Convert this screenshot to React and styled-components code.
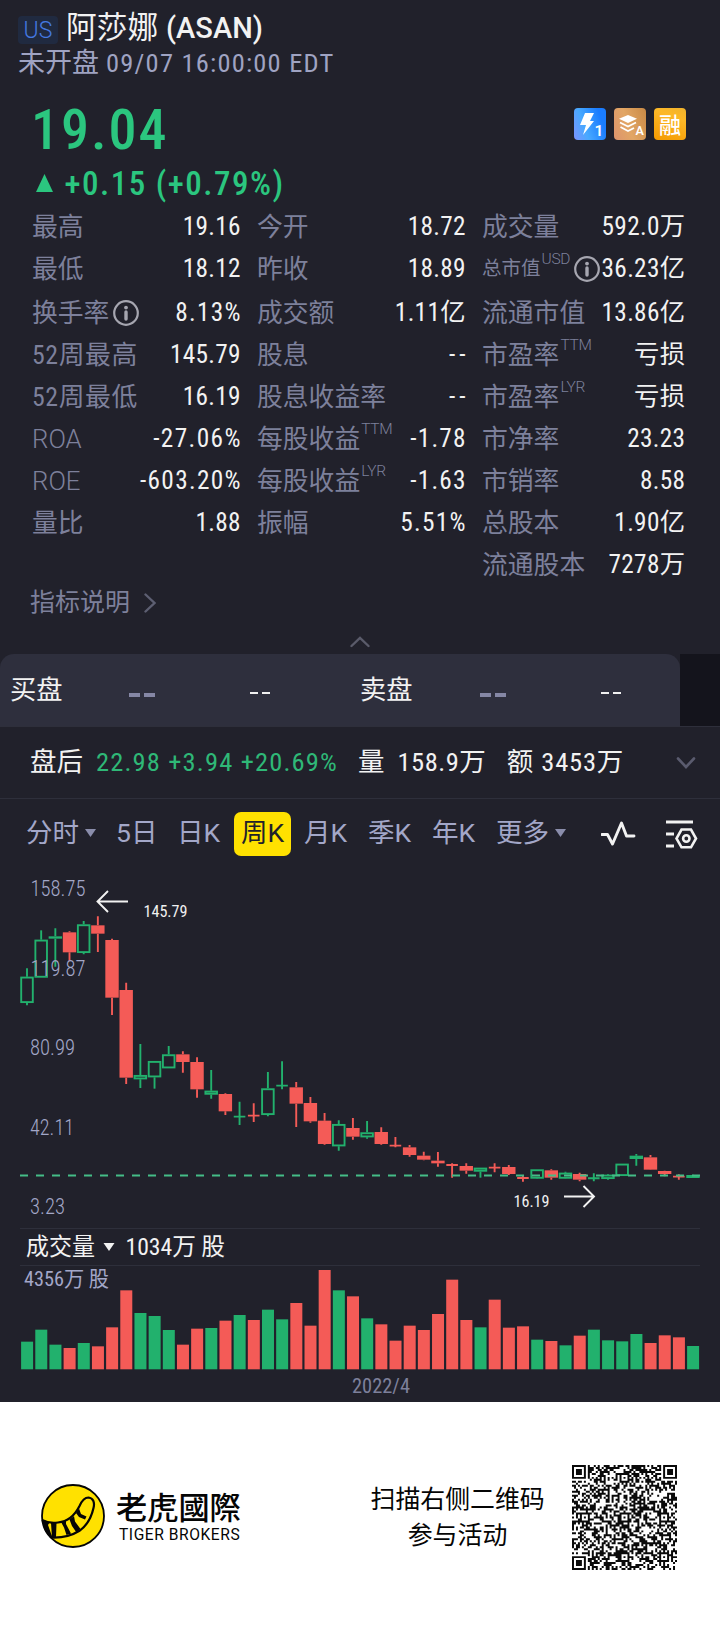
import React from 'react';
import styled, { createGlobalStyle } from 'styled-components';

const Global = createGlobalStyle`
  * { box-sizing: border-box; }
  body { margin: 0; background: #fff; }
`;

const condensed = '"Roboto Condensed", "Noto Sans CJK SC", sans-serif';
const regular = 'Roboto, "Noto Sans CJK SC", sans-serif';

const Page = styled.div`
  width: 720px;
  height: 1632px;
  display: flex;
  flex-direction: column;
  overflow: hidden;
  font-family: ${condensed};
  color: #f2f2f2;
`;
const Dark = styled.main`
  height: 1401.5px;
  background: #21212b;
  display: flex;
  flex-direction: column;
`;
const Text = styled.span`
  font-family: ${(p) => (p.$wide ? regular : condensed)};
  font-size: ${(p) => p.$size}px;
  font-weight: ${(p) => p.$weight || 400};
  letter-spacing: ${(p) => p.$ls || 0}px;
  color: ${(p) => p.$color || 'inherit'};
  line-height: 1;
  white-space: pre;
`;

/* Header */
const Header = styled.header`
  height: 96px;
  padding: 10px 0 0 18px;
`;
const TitleRow = styled.div`
  display: flex;
  align-items: center;
  height: 36px;
`;
const Market = styled.span`
  width: 40px;
  height: 28px;
  margin: 3px 8px 0 0;
  border-radius: 4px;
  background: #202a40;
  color: #4579e0;
  font: 350 23px/30px ${regular};
  text-align: center;
`;
const Status = styled.div`
  display: flex;
  align-items: center;
  gap: 7px;
  height: 34px;
  color: #9fa3c2;
`;

/* Price */
const PriceRow = styled.section`
  height: 110px;
  padding: 12px 34px 0 33px;
  display: flex;
  justify-content: space-between;
  color: #2bc67f;
`;
const PriceCol = styled.div`
  display: flex;
  flex-direction: column;
`;
const PriceLine = styled.div`
  height: 44px;
  margin-left: -2px;
  display: flex;
  align-items: center;
`;
const ChangeLine = styled.div`
  height: 40px;
  margin-top: 11px;
  display: flex;
  align-items: center;
  gap: 11.5px;
`;
const Badges = styled.div`
  display: flex;
  gap: 8px;
`;
const Badge = styled.span`
  width: 32px;
  height: 32px;
  border-radius: 4px;
  background: ${(p) => p.$bg};
  color: #fff;
  font: 500 22px/31px "Noto Sans CJK SC", sans-serif;
  text-align: center;
  overflow: hidden;
`;

/* Metrics */
const Metrics = styled.section`
  display: grid;
  grid-template-columns: 208.500px 208.500px 203px;
  column-gap: 16.500px;
  padding-left: 32px;
  height: 379px;
`;
const MetricCol = styled.div`
  display: flex;
  flex-direction: column;
`;
const Metric = styled.div`
  height: ${(p) => (p.$tall ? 44 : 42)}px;
  padding-top: ${(p) => (p.$tall ? 2 : 0)}px;
  display: flex;
  align-items: center;
  justify-content: space-between;
  white-space: nowrap;
`;
const Label = styled.span`
  display: flex;
  align-items: center;
  color: #7d809b;
  font-family: ${(p) => (p.$wide ? regular : condensed)};
  font-size: ${(p) => (p.$small ? 19.5 : 25.8)}px;
  font-weight: ${(p) => (p.$wide ? 350 : 400)};
  line-height: 36px;
  letter-spacing: ${(p) => p.$ls || 0}px;
`;
const Sup = styled.sup`
  font: 350 15.500px/16px ${regular};
  letter-spacing: -0.3px;
  align-self: flex-start;
  margin: 0 0 0 1px;
  vertical-align: baseline;
`;
const Value = styled.span`
  font-size: 25.300px;
  line-height: 36px;
  letter-spacing: ${(p) => p.$ls}px;
  margin-right: ${(p) => -p.$ls}px;
`;
const InfoIcon = styled.svg`
  margin-left: ${(p) => p.$gap}px;
  margin-right: ${(p) => p.$end || 0}px;
  flex: none;
`;

/* Explanation link and collapse handle */
const Explain = styled.div`
  height: 35px;
  padding-left: 30px;
  display: flex;
  align-items: center;
  gap: 14px;
  color: #7d809b;
`;
const Collapse = styled.div`
  height: 34px;
  display: flex;
  justify-content: center;
  align-items: center;
  padding-top: 10px;
`;

/* Bid / ask */
const BidWrap = styled.section`
  height: 72px;
  background: #21212b;
  display: grid;
  grid-template-columns: 680px 40px;
`;
const BidBar = styled.div`
  height: 73px;
  background: #2e2f3d;
  border-radius: 14px 14px 0 0;
  display: grid;
  grid-template-columns: 350px 330px;
  align-items: center;
`;
const Side = styled.div`
  display: grid;
  grid-template-columns: ${(p) => p.$first}px 120.5px 1fr;
  align-items: center;
  padding-left: 10px;
  height: 70px;
`;
const BidGap = styled.div`
  background: #14141c;
`;
const Dashes = styled.span`
  display: flex;
  gap: ${(p) => p.$gap}px;
  margin-top: ${(p) => p.$top}px;
  &::before, &::after {
    content: '';
    width: ${(p) => p.$w}px;
    height: ${(p) => p.$h}px;
    background: ${(p) => p.$c};
  }
`;

/* After-hours */
const AfterHours = styled.section`
  height: 73px;
  border-top: 1px solid #2e2f3b;
  border-bottom: 1px solid #2e2f3b;
  display: flex;
  align-items: center;
  padding: 0 24px 0 30px;
`;
const Gap = styled.span`
  flex: none;
  width: ${(p) => p.$w}px;
`;
const Push = styled.span`
  flex: 1;
`;

/* Tabs */
const Tabs = styled.nav`
  height: 70px;
  padding-left: 26px;
  display: flex;
  align-items: center;
  color: #a3a7c8;
`;
const Tab = styled.span`
  width: ${(p) => p.$w}px;
  height: 44px;
  flex: none;
  display: flex;
  align-items: center;
  gap: ${(p) => p.$gap || 0}px;
  justify-content: ${(p) => (p.$active ? 'center' : 'flex-start')};
  margin-right: ${(p) => p.$mr || 0}px;
  border-radius: 7px;
  background: ${(p) => (p.$active ? '#ffe100' : 'transparent')};
  color: ${(p) => (p.$active ? '#21212b' : 'inherit')};
  font: 370 26.5px/40px ${(p) => (p.$gap ? condensed : regular)};
  padding-bottom: 2px;
`;

const Chart = styled.svg`
  display: block;
  flex: none;
  font-family: ${condensed};
`;

/* Footer */
const Footer = styled.footer`
  flex: 1;
  background: #fff;
  color: #050505;
  display: flex;
  padding-left: 41px;
`;
const Logo = styled.svg`
  margin-top: 82.5px;
  flex: none;
`;
const Brand = styled.div`
  width: 136px;
  margin: 87px 0 0 11px;
  display: flex;
  flex-direction: column;
`;
const BrandName = styled.span`
  font: 500 31.200px/34px "Noto Sans CJK TC", "Noto Sans CJK SC", sans-serif;
  white-space: nowrap;
`;
const BrandLatin = styled.span`
  font: 400 15.6px/20px ${regular};
  letter-spacing: 0.55px;
  padding: 2px 0 0 3px;
  white-space: nowrap;
`;
const Invite = styled.div`
  width: 174px;
  margin: 77px 27.500px 0 118.500px;
  font: 400 24.9px/36px "Noto Sans CJK SC", sans-serif;
  text-align: center;
  white-space: nowrap;
`;
const Code = styled.svg`
  margin-top: 63px;
  flex: none;
`;

const Info = ({ gap, end }) => (
  <InfoIcon $gap={gap} $end={end} width="26" height="26" viewBox="0 0 26 26" fill="none">
    <circle cx="13" cy="13" r="11.8" stroke="#a6a6b0" strokeWidth="2.2" />
    <circle cx="13" cy="7.6" r="1.9" fill="#a6a6b0" />
    <path d="M13 12v7" stroke="#a6a6b0" strokeWidth="3.4" strokeLinecap="round" />
  </InfoIcon>
);

const METRICS = [
  [
    { label: '最高', value: '19.16' },
    { label: '最低', value: '18.12' },
    { label: '换手率', value: '8.13%', info: 4, ls: 1.3 },
    { label: '52周最高', value: '145.79', labelLs: 0.6 },
    { label: '52周最低', value: '16.19', labelLs: 0.6 },
    { label: 'ROA', value: '-27.06%', wide: true, ls: 1.4 },
    { label: 'ROE', value: '-603.20%', wide: true, ls: 1.3 },
    { label: '量比', value: '1.88' },
  ],
  [
    { label: '今开', value: '18.72' },
    { label: '昨收', value: '18.89' },
    { label: '成交额', value: '1.11亿' },
    { label: '股息', value: '--', ls: 4 },
    { label: '股息收益率', value: '--', ls: 4 },
    { label: '每股收益', sup: 'TTM', value: '-1.78', ls: 1.2 },
    { label: '每股收益', sup: 'LYR', value: '-1.63', ls: 1.2 },
    { label: '振幅', value: '5.51%', ls: 1.3 },
  ],
  [
    { label: '成交量', value: '592.0万' },
    { label: '总市值', sup: 'USD', value: '36.23亿', small: true, info: 4 },
    { label: '流通市值', value: '13.86亿' },
    { label: '市盈率', sup: 'TTM', value: '亏损' },
    { label: '市盈率', sup: 'LYR', value: '亏损' },
    { label: '市净率', value: '23.23' },
    { label: '市销率', value: '8.58' },
    { label: '总股本', value: '1.90亿' },
    { label: '流通股本', value: '7278万' },
  ],
];

/* rising?, high, low, body top, body bottom; thirds of a pixel below y = 870 */
const CANDLES = [
  [1, 295, 406, 320, 399], [1, 181, 323, 209, 323], [1, 175, 290, 199, 206, 1], [0, 184, 272, 187, 247],
  [1, 153, 253, 163, 249], [0, 139, 246, 166, 191], [0, 206, 435, 210, 383], [0, 338, 642, 360, 623],
  [1, 522, 654, 615, 628], [1, 573, 656, 573, 622], [1, 528, 595, 553, 595], [0, 544, 608, 553, 576],
  [0, 562, 683, 576, 658], [1, 600, 686, 662, 674], [0, 670, 735, 672, 724], [1, 695, 765, 738, 740],
  [0, 700, 756, 735, 738], [1, 606, 739, 655, 735], [1, 574, 658, 645, 648], [0, 636, 771, 652, 701],
  [0, 681, 758, 699, 754], [0, 729, 824, 752, 822], [1, 751, 842, 762, 829], [0, 744, 809, 774, 800],
  [1, 753, 806, 787, 802], [0, 772, 824, 786, 822], [0, 801, 832, 825, 829], [0, 825, 860, 832, 855],
  [0, 845, 871, 857, 869], [0, 846, 890, 872, 880], [0, 880, 923, 883, 886], [0, 880, 911, 888, 902],
  [1, 893, 923, 893, 905], [0, 880, 907, 891, 894], [0, 885, 915, 891, 912], [0, 918, 935, 922, 925],
  [1, 898, 927, 898, 926], [0, 898, 929, 901, 923], [1, 905, 927, 908, 926], [0, 908, 934, 912, 929],
  [1, 910, 934, 923, 926], [1, 912, 929, 914, 927], [1, 881, 918, 881, 918], [1, 852, 887, 857, 867, 1],
  [0, 855, 900, 862, 899], [0, 902, 919, 903, 912], [0, 913, 929, 918, 921], [1, 914, 924, 915, 924, 1],
];
/* rising?, bar top; thirds of a pixel below y = 1220 */
const VOLUMES = [
  [1, 365], [1, 329], [1, 374], [0, 384], [1, 369], [0, 379], [0, 322], [0, 211], [1, 279], [1, 288], [1, 330], [0, 374],
  [0, 326], [1, 324], [0, 302], [1, 285], [0, 300], [1, 269], [1, 298], [0, 249], [0, 317], [0, 150], [1, 211], [0, 229],
  [1, 295], [0, 313], [0, 362], [0, 317], [0, 330], [0, 282], [0, 179], [0, 300], [1, 322], [0, 239], [0, 323], [0, 319],
  [1, 359], [0, 363], [1, 376], [0, 347], [1, 329], [1, 361], [1, 364], [1, 342], [0, 369], [0, 346], [0, 352], [1, 378],
];
const UP = '#22b16d';
const DOWN = '#f45b57';
const pitch = 14.17;

const Candle = ({ index, data }) => {
  const [up, high, low, top, bottom, filled] = data;
  const x = 27 + index * pitch;
  const y = (v) => 870 + v / 3;
  const color = up ? UP : DOWN;
  const h = (bottom - top) / 3;
  if (h < 1.4) {
    return (
      <path d={`M${x} ${y(high)}V${y(low)}M${x - 5.8} ${y(top) + 0.6}h11.6`} stroke={color} strokeWidth="1.9" />
    );
  }
  const hollow = up && !filled && h > 3;
  return (
    <g stroke={color} strokeWidth="1.9">
      <path d={`M${x} ${y(high)}V${y(top)}M${x} ${y(bottom)}V${y(low)}`} />
      {hollow ? (
        <rect x={x - 5.8} y={y(top) + 0.9} width="11.6" height={h - 1.8} fill="none" />
      ) : (
        <rect x={x - 6.7} y={y(top)} width="13.4" height={h} fill={color} stroke="none" />
      )}
    </g>
  );
};

/* QR matrix, 53 modules a side */
const N = 53;
const buildCode = () => {
  let seed = 90731;
  const rnd = () => {
    seed = (seed * 1103515245 + 12345) % 2147483648;
    return seed / 2147483648;
  };
  const m = Array.from({ length: N }, () => Array.from({ length: N }, () => rnd() < 0.5));
  const ring = (cy, cx, r, levels) => {
    for (let y = -r; y <= r; y++)
      for (let x = -r; x <= r; x++) {
        const yy = cy + y;
        const xx = cx + x;
        if (yy >= 0 && xx >= 0 && yy < N && xx < N) m[yy][xx] = levels[Math.max(Math.abs(x), Math.abs(y))];
      }
  };
  for (let i = 8; i < N - 8; i++) {
    m[6][i] = i % 2 === 0;
    m[i][6] = i % 2 === 0;
  }
  [[3, 3], [3, N - 4], [N - 4, 3]].forEach(([y, x]) => ring(y, x, 4, [true, true, false, true, false]));
  [[6, 26], [26, 6], [26, 26], [26, 46], [46, 26], [46, 46]].forEach(([y, x]) => ring(y, x, 2, [true, false, true]));
  let d = '';
  m.forEach((row, y) => row.forEach((on, x) => { if (on) d += `M${x} ${y}h1v1h-1z`; }));
  return d;
};
const CODE = buildCode();

export default function App() {
  return (
    <Page>
      <Global />
      <Dark>
        <Header>
          <TitleRow>
            <Market>US</Market>
            <Text $size={30.700}>阿莎娜</Text>
            <Gap $w={8} />
            <Text $size={29} $weight={500} $wide>(ASAN)</Text>
          </TitleRow>
          <Status>
            <Text $size={27}>未开盘</Text>
            <Text $size={26.5} $ls={1.200} $weight={370}>09/07 16:00:00 EDT</Text>
          </Status>
        </Header>

        <PriceRow>
          <PriceCol>
            <PriceLine><Text $size={56} $weight={480} $ls={2}>19.04</Text></PriceLine>
            <ChangeLine>
              <svg width="20" height="20" viewBox="0 0 20 20"><path d="M11.500 1L20 19H3z" fill="#2bc67f" /></svg>
              <Text $size={33} $weight={460} $ls={1.5}>+0.15 (+0.79%)</Text>
            </ChangeLine>
          </PriceCol>
          <Badges>
            <Badge $bg="linear-gradient(70deg,#7b93ff 0%,#48a9ff 35%,#1a7cff 80%)">
              <svg width="32" height="32" viewBox="0 0 32 32">
                <path d="M11 5h9l-4 8h4L9 27l3-10H6z" fill="#fff" />
                <text x="20.500" y="27.500" fontSize="15.500" fontWeight="600" fill="#fff" fontFamily="Roboto">1</text>
              </svg>
            </Badge>
            <Badge $bg="linear-gradient(70deg,#dd946d 0%,#e2a665 45%,#c98a45 100%)">
              <svg width="32" height="32" viewBox="0 0 32 32" fill="none" stroke="#fff" strokeWidth="1.800">
                <path d="M14 7l9 3.800-9 4.200-9-4.200z" fill="#fff" stroke="none" />
                <path d="M6 14.500l8 4 8-4M6.500 19l7.500 4 6-3" />
                <text x="21.500" y="26.500" fontSize="12.500" fontWeight="600" fill="#fff" stroke="none" fontFamily="Roboto">A</text>
              </svg>
            </Badge>
            <Badge $bg="linear-gradient(200deg,#f0b32d 0%,#fdb827 30%,#f49a00 100%)">融</Badge>
          </Badges>
        </PriceRow>

        <Metrics>
          {METRICS.map((col, c) => (
            <MetricCol key={c}>
              {col.map((m, r) => (
                <Metric key={r} $tall={r === 2}>
                  <Label $wide={m.wide} $small={m.small} $ls={m.labelLs}>
                    {m.label}
                    {m.sup && <Sup>{m.sup}</Sup>}
                    {m.info && <Info gap={m.info} end={m.small ? -6 : 0} />}
                  </Label>
                  <Value $ls={m.ls || 0.3}>{m.value}</Value>
                </Metric>
              ))}
            </MetricCol>
          ))}
        </Metrics>

        <Explain>
          <Text $size={25}>指标说明</Text>
          <svg width="12" height="20" viewBox="0 0 12 20" fill="none">
            <path d="M1.500 1.500L10.500 10l-9 8.500" stroke="#5d5f72" strokeWidth="2.400" strokeLinecap="round" />
          </svg>
        </Explain>
        <Collapse>
          <svg width="20" height="12" viewBox="0 0 20 12" fill="none">
            <path d="M1.500 10L10 2l8.500 8" stroke="#5a5b6a" strokeWidth="2.400" strokeLinecap="round" />
          </svg>
        </Collapse>

        <BidWrap>
          <BidBar>
            <Side $first={119}>
              <Text $size={26.3}>买盘</Text>
              <Dashes $w={11} $h={3.5} $gap={4} $top={9} $c="#8587a5" />
              <Dashes $w={8.5} $h={2} $gap={3.5} $top={4} $c="#f0f0f0" />
            </Side>
            <Side $first={120}>
              <Text $size={26.3}>卖盘</Text>
              <Dashes $w={11} $h={3.5} $gap={4} $top={9} $c="#8587a5" />
              <Dashes $w={8.5} $h={2} $gap={3.5} $top={4} $c="#f0f0f0" />
            </Side>
          </BidBar>
          <BidGap />
        </BidWrap>

        <AfterHours>
          <Text $size={26.5}>盘后</Text>
          <Gap $w={13} />
          <Text $size={26.5} $ls={1.150} $weight={370} $color="#2fb877">22.98 +3.94 +20.69%</Text>
          <Gap $w={20} />
          <Text $size={26.5}>量</Text>
          <Gap $w={13} />
          <Text $size={26.500} $ls={0.500}>158.9万</Text>
          <Gap $w={20.500} />
          <Text $size={26.5}>额</Text>
          <Gap $w={8} />
          <Text $size={26.500} $ls={0.800}>3453万</Text>
          <Push />
          <svg width="20" height="12" viewBox="0 0 20 12" fill="none">
            <path d="M2 1.500L10 10l8-8.500" stroke="#5a5b6e" strokeWidth="2.600" strokeLinecap="round" />
          </svg>
        </AfterHours>

        <Tabs>
          <Tab $w={90} $gap={6}>
            分时
            <svg width="11" height="8" viewBox="0 0 11 8"><path d="M0 0h11L5.500 8z" fill="#8a8dab" /></svg>
          </Tab>
          <Tab $w={61}>5日</Tab>
          <Tab $w={57}>日K</Tab>
          <Tab $w={57} $active $mr={13}>周K</Tab>
          <Tab $w={64}>月K</Tab>
          <Tab $w={64}>季K</Tab>
          <Tab $w={64}>年K</Tab>
          <Tab $w={105} $gap={6}>
            更多
            <svg width="11" height="8" viewBox="0 0 11 8"><path d="M0 0h11L5.500 8z" fill="#8a8dab" /></svg>
          </Tab>
          <svg width="36" height="28" viewBox="1 0 36 28" fill="none" stroke="#f2f2f2" strokeWidth="2.900" strokeLinecap="round" strokeLinejoin="round">
            <path d="M2 14.500h5.500l5 9.500L21.500 3l5 13h7.500" />
          </svg>
          <Gap $w={28} />
          <svg width="34" height="30" viewBox="0 0 34 30" fill="none" stroke="#f2f2f2" strokeWidth="2.800">
            <path d="M1 3h27M1 15h8M1 27h8" />
            <path d="M16.500 10.500h9.500l5 9-5 8.800H16.500l-5-8.800z" strokeWidth="2.600" />
            <circle cx="21.300" cy="19.500" r="3.200" strokeWidth="2.600" />
          </svg>
        </Tabs>

        <Chart width="720" height="532.5" viewBox="0 869 720 532.5">
          {CANDLES.map((d, i) => <Candle key={i} index={i} data={d} />)}
          <path d="M20 1175.500H700" stroke="#45bd87" strokeWidth="2" strokeDasharray="8 8" />
          <g fontSize="21.500" fill="#a3a7c8" fontWeight="350">
            <text x="30.500" y="895.500" textLength="55" lengthAdjust="spacingAndGlyphs">158.75</text>
            <text x="30.500" y="975.500" textLength="55" lengthAdjust="spacingAndGlyphs">119.87</text>
            <text x="30" y="1054.500" textLength="45" lengthAdjust="spacingAndGlyphs">80.99</text>
            <text x="30" y="1134.500" textLength="44" lengthAdjust="spacingAndGlyphs">42.11</text>
            <text x="30" y="1213.500" textLength="35" lengthAdjust="spacingAndGlyphs">3.23</text>
          </g>
          <g fontSize="16.500" fill="#f0f0f0">
            <text x="143.500" y="916.500" textLength="44" lengthAdjust="spacingAndGlyphs">145.79</text>
            <text x="513.500" y="1206.500" textLength="36" lengthAdjust="spacingAndGlyphs">16.19</text>
          </g>
          <g stroke="#f2f2f2" strokeWidth="1.900" fill="none">
            <path d="M128 901.500H98M108 891L97.500 901.500L108 912" />
            <path d="M564 1196.500H593M583.500 1186L594 1196.500L583.500 1207" />
          </g>
          <path d="M20 1228.500H700M20 1265.500H700" stroke="#2e2f3b" />
          <g fontSize="24" fill="#f2f2f2">
            <text x="26" y="1255" textLength="69" lengthAdjust="spacingAndGlyphs">成交量</text>
            <text x="125.500" y="1255" textLength="99.500" lengthAdjust="spacingAndGlyphs">1034万 股</text>
          </g>
          <path d="M103.500 1243h11l-5.500 8z" fill="#f2f2f2" />
          {VOLUMES.map(([up, top], i) => (
            <rect key={i} x={27 + i * pitch - 5.9} y={1220 + top / 3} width="12" height={149.3 - top / 3} fill={up ? UP : DOWN} />
          ))}
          <text x="24" y="1285.500" fontSize="21" fill="#a3a7c8" textLength="85" lengthAdjust="spacingAndGlyphs">4356万 股</text>
          <text x="352" y="1393" fontSize="20.500" fill="#7d809b" textLength="58" lengthAdjust="spacingAndGlyphs">2022/4</text>
        </Chart>
      </Dark>

      <Footer>
        <Logo width="64" height="64" viewBox="0 0 64 64">
          <circle cx="32" cy="32" r="31" fill="#ffe100" stroke="#050505" strokeWidth="1.800" />
          <path d="M1 36C7 39 12 39.500 17 38.500C27 37.500 34 31 38.500 22C40.500 17.500 43 13.500 47.500 13.500C52 14 54 18 52.500 24C50.500 33 46 41.500 38.500 46.800C31 51.500 20 54 10 53.500" fill="none" stroke="#050505" strokeWidth="2.200" />
          <path d="M1 35.500L8.500 38.500L7 41L11.500 53.800H9L3.500 46zM10 39h5.500l-.5 14.500h-4zM20 38l5-1.500v3.500l5 9.500-4.500 1.500-2.500-7.500zM28.500 35.500l4.500-3.500 1 5.500 5.500 7.500-4 3.500-4.500-6.500zM35 29l3-4.500 2 5.500 5.500 2.500-1.500 3-6-2.500z" fill="#050505" />
        </Logo>
        <Brand>
          <BrandName>老虎國際</BrandName>
          <BrandLatin>TIGER BROKERS</BrandLatin>
        </Brand>
        <Invite>扫描右侧二维码<br />参与活动</Invite>
        <Code width="105" height="105" viewBox={`0 0 ${N} ${N}`}>
          <path d={CODE} fill="#0a0a0a" />
        </Code>
      </Footer>
    </Page>
  );
}
